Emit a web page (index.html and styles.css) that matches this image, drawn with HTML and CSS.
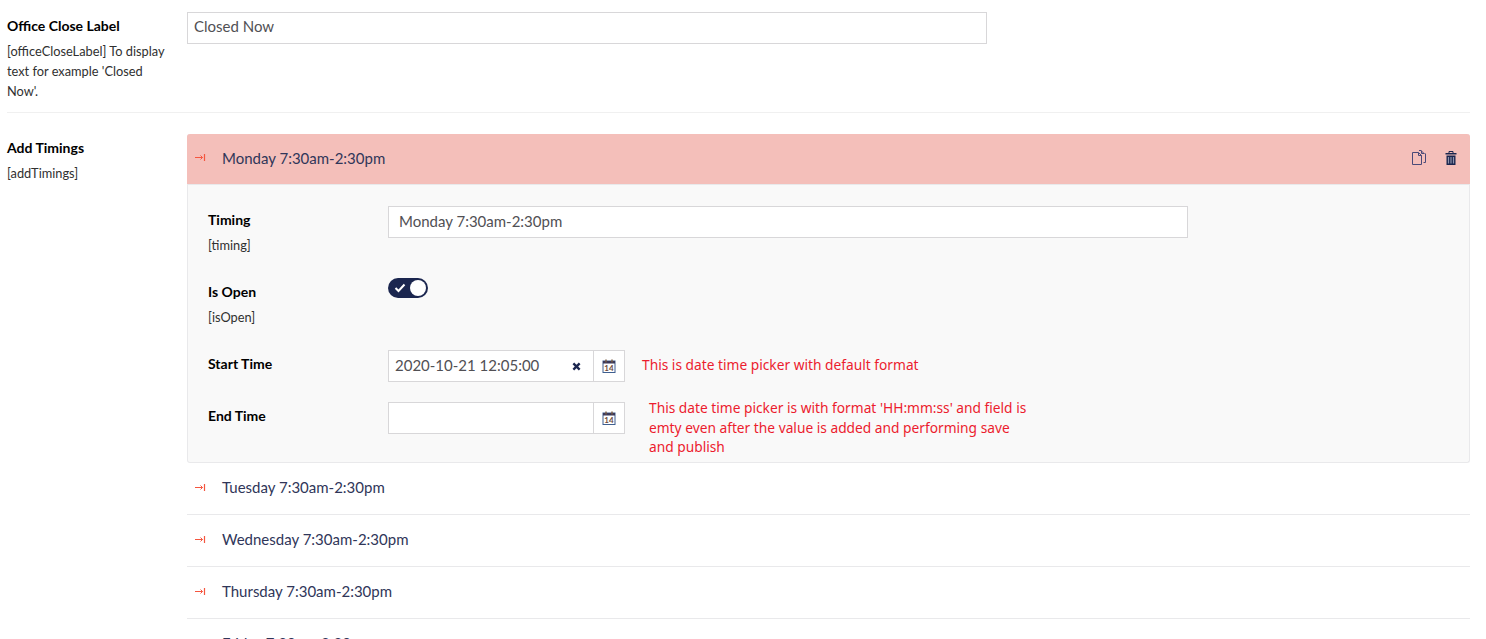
FILE: index.html
```html
<!DOCTYPE html>
<html lang="en">
<head>
<meta charset="utf-8">
<title>Timings</title>
<link rel="stylesheet" href="styles.css">
</head>
<body>
<svg class="defs" width="0" height="0" aria-hidden="true">
  <symbol id="collapse" viewBox="0 0 11 7">
    <path d="M0 3.500h7.500M5.500 1.500l2 2-2 2" fill="none" stroke="currentColor" stroke-width="1"/>
    <path d="M9.500 0v7" fill="none" stroke="currentColor" stroke-width="1.200"/>
  </symbol>
  <symbol id="cal" viewBox="0 0 14 14">
    <rect x="1" y="2" width="12" height="11.500" fill="#fff" stroke="#3f5f8f" stroke-width="1"/>
    <rect x="1" y="2" width="12" height="2.500" fill="#3a3a5c"/>
    <path d="M4 0.500v3M10 0.500v3" stroke="#7a5a40" stroke-width="1.400"/>
    <text x="7" y="12" class="cal-num">14</text>
  </symbol>
</svg>
<main class="page">
  <section class="prop prop-first">
    <div class="prop-label">
      <h4>Office Close Label</h4>
      <p>[officeCloseLabel] To display text for example 'Closed Now'.</p>
    </div>
    <div class="prop-editor">
      <input class="text wide" type="text" value="Closed Now">
    </div>
  </section>
  <section class="prop prop-second">
    <div class="prop-label">
      <h4>Add Timings</h4>
      <p>[addTimings]</p>
    </div>
    <div class="prop-editor">
      <div class="item open">
        <div class="item-head">
          <svg class="arrow"><use href="#collapse"/></svg>
          <span class="item-title">Monday 7:30am-2:30pm</span>
          <span class="tools">
            <svg class="tool" viewBox="0 0 18 16"><path d="M2.500 2.500h6l3 3v9h-9z" fill="none" stroke="#4a4a78" stroke-width="1"/><path d="M8.500 2.500v3h3" fill="none" stroke="#4a4a78" stroke-width="1"/><path d="M9 0.500h2l3 3v0M11.500 0.500v3h3M15.500 3.500v9h-2" fill="none" stroke="#4a4a78" stroke-width="1"/></svg>
            <svg class="tool" viewBox="0 0 16 16"><path d="M2.500 3h11v1.500h-11z" fill="#1b264f"/><path d="M6 3V1.500h4V3" fill="none" stroke="#1b264f"/><path d="M3.500 5.500h9v9.500h-9z" fill="#1b264f"/><path d="M5.500 7v6.500M8 7v6.500M10.500 7v6.500" stroke="#8f93ab" stroke-width="1.200"/></svg>
          </span>
        </div>
        <div class="item-body">
          <div class="field field-timing">
            <div class="field-label"><h5>Timing</h5><p>[timing]</p></div>
            <input class="text wide" type="text" value="Monday 7:30am-2:30pm">
          </div>
          <div class="field field-open">
            <div class="field-label"><h5>Is Open</h5><p>[isOpen]</p></div>
            <span class="toggle">
              <svg class="check" viewBox="0 0 12 10"><path d="M1.500 5l3 3 6-6.500" fill="none" stroke="#fff" stroke-width="2"/></svg>
              <span class="knob"></span>
            </span>
          </div>
          <div class="field field-start">
            <div class="field-label"><h5>Start Time</h5></div>
            <div class="picker">
              <span class="picker-value">2020-10-21 12:05:00</span>
              <svg class="clear" viewBox="0 0 10 10"><path d="M1.500 1.500l7 7M8.500 1.500l-7 7" stroke="#1b264f" stroke-width="2.600"/></svg>
              <span class="picker-btn"><svg class="cal"><use href="#cal"/></svg></span>
            </div>
            <p class="note note-start">This is date time picker with default format</p>
          </div>
          <div class="field field-end">
            <div class="field-label"><h5>End Time</h5></div>
            <div class="picker">
              <span class="picker-value"></span>
              <span class="picker-btn"><svg class="cal"><use href="#cal"/></svg></span>
            </div>
            <p class="note note-end">This date time picker is with format 'HH:mm:ss' and field is emty even after the value is added and performing save and publish</p>
          </div>
        </div>
      </div>
      <div class="item">
        <div class="item-head"><svg class="arrow"><use href="#collapse"/></svg><span class="item-title">Tuesday 7:30am-2:30pm</span></div>
      </div>
      <div class="item">
        <div class="item-head"><svg class="arrow"><use href="#collapse"/></svg><span class="item-title">Wednesday 7:30am-2:30pm</span></div>
      </div>
      <div class="item">
        <div class="item-head"><svg class="arrow"><use href="#collapse"/></svg><span class="item-title">Thursday 7:30am-2:30pm</span></div>
      </div>
      <div class="item">
        <div class="item-head"><svg class="arrow"><use href="#collapse"/></svg><span class="item-title">Friday 7:30am-2:30pm</span></div>
      </div>
    </div>
  </section>
</main>
</body>
</html>
```
FILE: styles.css
```css
html, body {
  margin: 0;
  padding: 0;
  height: 639px;
  overflow: hidden;
  background: #fff;
}
body {
  font-family: Lato, "Open Sans", sans-serif;
  font-size: 15px;
  color: #1b264f;
}
.defs { display: block; }
.page { margin: 0 16px 0 7px; }
h4, h5, p { margin: 0; }
.prop { display: flex; }
.prop-first {
  padding: 12px 0 13px;
  border-bottom: 1px solid #f0f0f0;
  height: 87px;
}
.prop-second { padding-top: 21px; }
.prop-label { width: 180px; flex: none; }
.prop-label h4, .field-label h5 {
  font-size: 14px;
  line-height: 20px;
  font-weight: 700;
  color: #000;
  margin-top: 4px;
}
.prop-label p, .field-label p {
  font-size: 12.8px;
  line-height: 20px;
  margin-top: 5px;
  color: #303030;
  width: 165px;
}
.prop-editor { flex: 1; min-width: 0; }
.text {
  box-sizing: border-box;
  height: 32px;
  border: 1px solid #d8d7d9;
  background: #fff;
  font: 15px Lato, sans-serif;
  color: #515054;
  outline: none;
  padding-bottom: 4px;
}
.wide { width: 800px; display: block; }
.prop-first .text { padding-left: 6px; padding-right: 6px; padding-bottom: 6px; }
.field-timing .text { padding-left: 10px; padding-right: 10px; }
.item { border-bottom: 1px solid #e9e9eb; }
.item-head {
  box-sizing: border-box;
  height: 51px;
  display: flex;
  align-items: center;
  padding: 0 0 3px 8px;
}
.open {
  border: 1px solid #e9e9eb;
  border-top: 0;
  border-radius: 3px;
  background: #f9f9f9;
  height: 329px;
  box-sizing: border-box;
}
.open .item-head {
  height: 51px;
  margin: 0 -1px;
  padding-bottom: 3px;
  background: #f4bfba;
  border-radius: 3px 3px 0 0;
  border-bottom: 1px solid #e9e9eb;
}
.arrow { width: 11px; height: 7px; color: #f5563f; flex: none; }
.item-title { margin-left: 16px; color: #303659; font-size: 15px; }
.tools { margin-left: auto; display: flex; gap: 14px; padding-right: 10px; }
.tool { width: 18px; height: 16px; display: block; }
.item-body { padding: 21px 0 0 20px; }
.field { display: flex; align-items: flex-start; }
.field-label { width: 180px; flex: none; }
.field-label h5 { margin-top: 4px; }
.field-timing { height: 72px; }
.field-open { height: 72px; }
.field-start { height: 52px; }
.toggle {
  position: relative;
  display: block;
  width: 40px;
  height: 20px;
  border-radius: 10px;
  background: #1b264f;
}
.check { position: absolute; left: 6px; top: 5px; width: 12px; height: 10px; }
.knob {
  position: absolute;
  right: 2px;
  top: 2px;
  width: 16px;
  height: 16px;
  border-radius: 50%;
  background: #fff;
}
.picker {
  box-sizing: border-box;
  display: flex;
  align-items: center;
  flex: none;
  width: 237px;
  height: 32px;
  border: 1px solid #d8d7d9;
  background: #fff;
}
.picker-value { flex: 1; padding: 0 0 2px 6px; color: #515054; font-size: 15px; }
.clear { width: 9px; height: 9px; margin-right: 12px; }
.picker-btn {
  box-sizing: border-box;
  width: 31px;
  height: 30px;
  border-left: 1px solid #d8d7d9;
  display: flex;
  align-items: center;
  justify-content: center;
}
.cal { width: 14px; height: 14px; }
.cal-num {
  font: 700 8px Lato, sans-serif;
  fill: #6b4a3a;
  text-anchor: middle;
}
.note {
  color: #ec1c2e;
  font-family: "Noto Sans", sans-serif;
  font-size: 13.75px;
  line-height: 19.5px;
}
.note-start { margin: 5px 0 0 17px; }
.note-end { margin: -4px 0 0 24px; width: 385px; }
```
